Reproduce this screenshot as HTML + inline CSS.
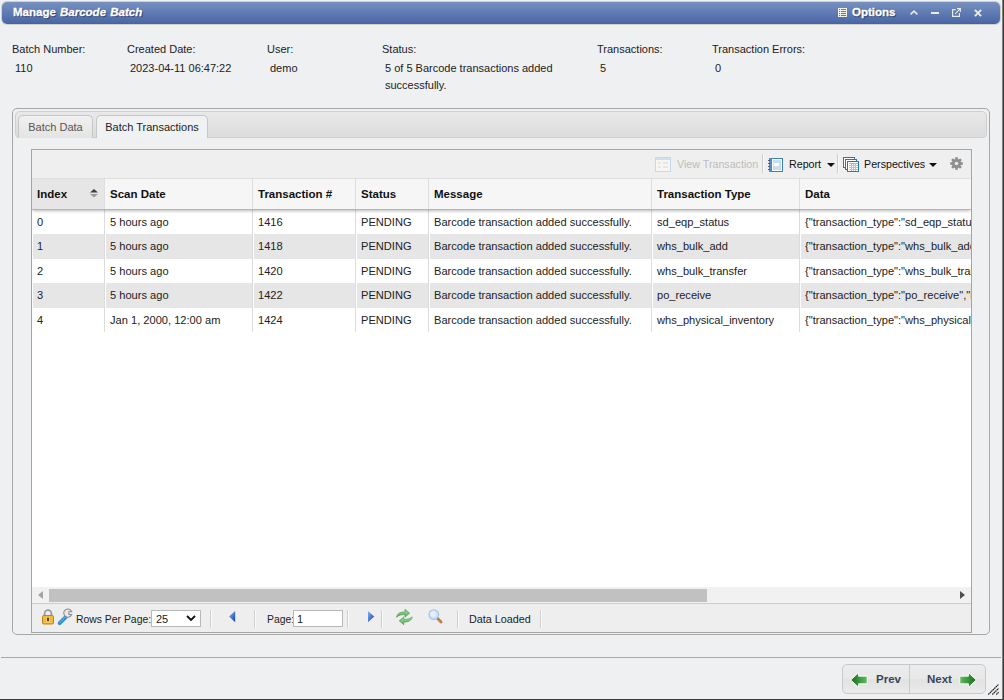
<!DOCTYPE html>
<html><head><meta charset="utf-8">
<style>
*{box-sizing:border-box;margin:0;padding:0}
html,body{width:1004px;height:700px;overflow:hidden;background:#eff0f2;font-family:"Liberation Sans",sans-serif;font-size:11px;color:#222;position:relative}
.abs{position:absolute}
svg{position:absolute;overflow:visible}
#titlebar{left:2px;top:2px;width:998px;height:22px;border-radius:5px;background:linear-gradient(#7690bf,#4a68a8 95%,#4060a2);box-shadow:0 0 0 1px #d3d0ca}
#title{left:13px;top:6px;color:#fff;font-weight:bold;font-size:11.5px;-webkit-text-stroke:0.3px #fff;word-spacing:1px;text-shadow:1px 1px 1px #23355e;white-space:nowrap}
#opts{left:852px;top:6px;color:#fff;font-weight:bold;font-size:11.5px;-webkit-text-stroke:0.3px #fff;text-shadow:1px 1px 1px #23355e;white-space:nowrap}
#edge{left:1002px;top:0;width:2px;height:700px;background:#3c3c3c;border-left:1px solid #808080}
#edge2{left:0;top:699px;width:1004px;height:1px;background:#3a3a3a}
.lbl{font-size:11px;color:#222;white-space:nowrap}
#frame{left:12px;top:108px;width:978px;height:527px;border:1px solid #a7a7a7;border-radius:5px}
#tabstrip{left:15px;top:111px;width:972px;height:27px;border:1px solid #cfcfcf;border-radius:5px 5px 4px 4px;background:linear-gradient(#e9e9e9,#dcdcdc)}
.tab{top:115px;height:23px;border:1px solid #c5c5c5;border-bottom:none;border-radius:5px 5px 0 0;font-size:11px;padding-top:5px;text-align:center}
#grid{left:31px;top:149px;width:941px;height:484px;border:1px solid #a5a5a5;background:#fff;overflow:hidden}
#tbar{left:0;top:0;width:939px;height:29px;background:#efefef}
.tb{position:absolute;top:8px;font-size:10.7px;color:#111;white-space:nowrap}
.tsep{position:absolute;top:4px;width:2px;height:19px;border-left:1px solid #cdcdcd;border-right:1px solid #fafafa}
#hdr{z-index:2;left:0;top:28px;width:939px;height:32px;background:#f6f6f6;border-top:1px solid #dedede;border-bottom:1px solid #b4b4b4;box-shadow:0 2px 3px -1px rgba(0,0,0,.28)}
.hc{position:absolute;top:0;height:30px;border-right:1px solid #dedede;font-weight:bold;font-size:11.5px;color:#111;padding:9px 0 0 5px;white-space:nowrap}
.row{position:absolute;left:0;width:939px;height:24.4px;overflow:hidden}
.row.alt{background:#e6e6e6}
.c0{border-left-color:#fff;padding-left:5px}
.c{position:absolute;top:0;height:100%;border-left:1px solid #fff;border-right:1px solid #dcdcdc;padding:6px 0 0 4px;white-space:nowrap;overflow:hidden;font-size:11.1px;color:#222}
#scroll{left:0;top:437px;width:939px;height:17px;background:#f1f1f1;border-bottom:1px solid #cdcdcd}
#thumb{left:17px;top:2px;width:658px;height:13px;background:#c1c1c1}
#foot{left:0;top:454px;width:939px;height:28px;background:#eeeeee}
.ft{position:absolute;top:10px;font-size:10.4px;color:#222;white-space:nowrap}
.fsep{position:absolute;top:6px;width:2px;height:18px;border-left:1px solid #cfcfcf;border-right:1px solid #fbfbfb}
#bsep{left:1px;top:657px;width:1000px;height:1px;background:#a9a9a9}
#btns{left:842px;top:664px;width:144px;height:30px;border:1px solid #c9c9c9;border-radius:5px;background:linear-gradient(#ececec,#e8e8e8 50%,#e2e2e2 52%,#ebebeb)}
.bt{position:absolute;top:673px;font-weight:bold;font-size:11.5px;color:#38455a;white-space:nowrap}
</style></head><body>
<div id="edge" class="abs"></div>
<div id="edge2" class="abs"></div>
<div id="titlebar" class="abs"></div>
<div id="title" class="abs">Manage <i>Barcode Batch</i></div>
<!-- list icon -->
<svg style="left:838px;top:8px" width="9" height="9" viewBox="0 0 9 9">
  <rect x="0.5" y="0.5" width="8" height="8" fill="none" stroke="#f2efe6" stroke-width="1"/>
  <path d="M0 2.5H9M0 4.5H9M0 6.5H9M2.5 0V9" stroke="#f2efe6" stroke-width="1"/>
</svg>
<div id="opts" class="abs">Options</div>
<svg style="left:910px;top:10px" width="8" height="5" viewBox="0 0 8 5"><path d="M0.6 4.4L4 1.2L7.4 4.4" fill="none" stroke="#ebe9e2" stroke-width="1.6"/></svg>
<div class="abs" style="left:931px;top:12px;width:8px;height:2px;background:#ebe9e2"></div>
<svg style="left:952px;top:8px" width="9" height="9" viewBox="0 0 9 9"><path d="M3.6 1.6H0.6V8.4H7.4V5" fill="none" stroke="#ebe9e2" stroke-width="1.2"/><path d="M3.2 5.8L8.2 0.8M5 0.6H8.4V4" fill="none" stroke="#ebe9e2" stroke-width="1.1"/></svg>
<svg style="left:974px;top:9px" width="8" height="8" viewBox="0 0 8 8"><path d="M0.9 0.9L7.1 7.1M7.1 0.9L0.9 7.1" stroke="#ebe9e2" stroke-width="2"/></svg>

<div class="abs lbl" style="left:12px;top:43px">Batch Number:</div>
<div class="abs lbl" style="left:15px;top:62px">110</div>
<div class="abs lbl" style="left:127px;top:43px">Created Date:</div>
<div class="abs lbl" style="left:130px;top:62px">2023-04-11 06:47:22</div>
<div class="abs lbl" style="left:267px;top:43px">User:</div>
<div class="abs lbl" style="left:270px;top:62px">demo</div>
<div class="abs lbl" style="left:382px;top:43px">Status:</div>
<div class="abs lbl" style="left:385px;top:60px;line-height:17px">5 of 5 Barcode transactions added<br>successfully.</div>
<div class="abs lbl" style="left:597px;top:43px">Transactions:</div>
<div class="abs lbl" style="left:600px;top:62px">5</div>
<div class="abs lbl" style="left:712px;top:43px">Transaction Errors:</div>
<div class="abs lbl" style="left:715px;top:62px">0</div>

<div id="frame" class="abs"></div>
<div id="tabstrip" class="abs"></div>
<div class="abs tab" style="left:18px;width:75px;background:linear-gradient(#f0f0f0,#e4e4e4);color:#555">Batch Data</div>
<div class="abs tab" style="left:96px;width:112px;background:#f0f1f3;color:#222">Batch Transactions</div>

<div id="grid" class="abs">
  <div id="tbar" class="abs">
    <svg style="left:623px;top:7px" width="16" height="15" viewBox="0 0 16 15"><rect x="0.5" y="0.5" width="15" height="14" fill="#f7f5f2" stroke="#c5dae6"/><rect x="1" y="1" width="14" height="2" fill="#cfe0ea"/><path d="M3 6H6M3 10H6M8 6H13M8 10H13" stroke="#d8d8d8"/></svg>
    <div class="tb" style="left:645px;color:#bdbdbd">View Transaction</div>
    <div class="tsep" style="left:730px"></div>
    <svg style="left:736px;top:8px" width="15" height="15" viewBox="0 0 15 15"><rect x="1.5" y="0.5" width="13" height="13" fill="#fff" stroke="#3f7cbc"/><rect x="1" y="0" width="3" height="14" fill="#4a8ccc"/><rect x="5" y="2" width="8" height="10" fill="#c6def4"/><rect x="6" y="5" width="5" height="3" fill="#fff"/><path d="M0 2.5H2M0 5.5H2M0 8.5H2M0 11.5H2" stroke="#6b5a50"/></svg>
    <div class="tb" style="left:757px">Report</div>
    <svg style="left:795px;top:13px" width="8" height="4" viewBox="0 0 8 4"><path d="M0 0H8L4 4Z" fill="#111"/></svg>
    <div class="tsep" style="left:805px"></div>
    <svg style="left:811px;top:7px" width="17" height="16" viewBox="0 0 17 16" shape-rendering="crispEdges">
      <rect x="0.5" y="0.5" width="11" height="10" fill="#fff" stroke="#1f7ab8" stroke-width="1"/>
      <rect x="2.5" y="2.5" width="11" height="10" fill="#fff" stroke="#1f7ab8" stroke-width="1"/>
      <rect x="4.5" y="4.5" width="11" height="10" fill="#fff" stroke="#1f7ab8" stroke-width="1"/>
      <path d="M6 6.5H15" stroke="#f0b020" stroke-width="1"/>
      <path d="M6 8.5H15M6 10.5H15M6 12.5H15M8.5 7V14M10.5 7V14M12.5 7V14" stroke="#a9c8e0" stroke-width="1"/>
    </svg>
    <div class="tb" style="left:832px">Perspectives</div>
    <svg style="left:897px;top:13px" width="8" height="4" viewBox="0 0 8 4"><path d="M0 0H8L4 4Z" fill="#111"/></svg>
    <svg style="left:918px;top:7px" width="13" height="13" viewBox="-6.5 -6.5 13 13">
      <g fill="#8e8e8e"><circle r="4.6"/>
      <rect x="-1.3" y="-6.3" width="2.6" height="12.6"/><rect x="-1.3" y="-6.3" width="2.6" height="12.6" transform="rotate(45)"/><rect x="-1.3" y="-6.3" width="2.6" height="12.6" transform="rotate(90)"/><rect x="-1.3" y="-6.3" width="2.6" height="12.6" transform="rotate(135)"/></g>
      <circle r="1.8" fill="#efefef"/>
    </svg>
  </div>
  <div id="hdr" class="abs">
    <div class="hc" style="left:0px;width:73px;background:#e6e6e6">Index</div>
    <div class="hc" style="left:73px;width:148px">Scan Date</div>
    <div class="hc" style="left:221px;width:103px">Transaction #</div>
    <div class="hc" style="left:324px;width:73px">Status</div>
    <div class="hc" style="left:397px;width:223px">Message</div>
    <div class="hc" style="left:620px;width:148px">Transaction Type</div>
    <div class="hc" style="left:768px;width:200px">Data</div>
    <svg style="left:58px;top:10px" width="8" height="9" viewBox="0 0 8 9"><path d="M0 3.5L4 0L8 3.5Z" fill="#3c3c3c"/><path d="M0 5L4 8.5L8 5Z" fill="#9a9a9a"/></svg>
  </div>
  <div class="row" style="top:60.0px"><div class="c c0" style="left:0px;width:73px">0</div><div class="c" style="left:73px;width:148px">5 hours ago</div><div class="c" style="left:221px;width:103px">1416</div><div class="c" style="left:324px;width:73px">PENDING</div><div class="c" style="left:397px;width:223px">Barcode transaction added successfully.</div><div class="c" style="left:620px;width:148px">sd_eqp_status</div><div class="c" style="left:768px;width:200px">{"transaction_type":"sd_eqp_status","</div></div>
  <div class="row alt" style="top:84.4px"><div class="c c0" style="left:0px;width:73px">1</div><div class="c" style="left:73px;width:148px">5 hours ago</div><div class="c" style="left:221px;width:103px">1418</div><div class="c" style="left:324px;width:73px">PENDING</div><div class="c" style="left:397px;width:223px">Barcode transaction added successfully.</div><div class="c" style="left:620px;width:148px">whs_bulk_add</div><div class="c" style="left:768px;width:200px">{"transaction_type":"whs_bulk_add","</div></div>
  <div class="row" style="top:108.8px"><div class="c c0" style="left:0px;width:73px">2</div><div class="c" style="left:73px;width:148px">5 hours ago</div><div class="c" style="left:221px;width:103px">1420</div><div class="c" style="left:324px;width:73px">PENDING</div><div class="c" style="left:397px;width:223px">Barcode transaction added successfully.</div><div class="c" style="left:620px;width:148px">whs_bulk_transfer</div><div class="c" style="left:768px;width:200px">{"transaction_type":"whs_bulk_transfer","</div></div>
  <div class="row alt" style="top:133.2px"><div class="c c0" style="left:0px;width:73px">3</div><div class="c" style="left:73px;width:148px">5 hours ago</div><div class="c" style="left:221px;width:103px">1422</div><div class="c" style="left:324px;width:73px">PENDING</div><div class="c" style="left:397px;width:223px">Barcode transaction added successfully.</div><div class="c" style="left:620px;width:148px">po_receive</div><div class="c" style="left:768px;width:200px">{"transaction_type":"po_receive","i</div></div>
  <div class="row" style="top:157.6px"><div class="c c0" style="left:0px;width:73px">4</div><div class="c" style="left:73px;width:148px">Jan 1, 2000, 12:00 am</div><div class="c" style="left:221px;width:103px">1424</div><div class="c" style="left:324px;width:73px">PENDING</div><div class="c" style="left:397px;width:223px">Barcode transaction added successfully.</div><div class="c" style="left:620px;width:148px">whs_physical_inventory</div><div class="c" style="left:768px;width:200px">{"transaction_type":"whs_physical_inventory"</div></div>
  <div id="scroll" class="abs">
    <svg style="left:6px;top:4px" width="5" height="8" viewBox="0 0 5 8"><path d="M5 0V8L0 4Z" fill="#a3a3a3"/></svg>
    <div id="thumb" class="abs"></div>
    <svg style="left:928px;top:4px" width="5" height="8" viewBox="0 0 5 8"><path d="M0 0V8L5 4Z" fill="#505050"/></svg>
  </div>
  <div id="foot" class="abs">
    <svg style="left:10px;top:5px" width="13" height="16" viewBox="0 0 13 16">
      <path d="M2.6 6.5V4.6A3.4 3.4 0 0 1 9.4 4.6V6.5" fill="none" stroke="#9c9c9c" stroke-width="1.7"/>
      <path d="M1.8 6.2H3.4M8.6 6.2H10.2" stroke="#6a8ab0" stroke-width="0.8"/>
      <rect x="0.5" y="6.5" width="11" height="8.5" rx="1.2" fill="#e9a928" stroke="#c5821a"/>
      <rect x="1.6" y="7.6" width="8.8" height="6.2" fill="#f9d56a"/>
      <path d="M2.2 9H4.3M2.2 10.7H4.3M2.2 12.4H4.3M7.7 9H9.8M7.7 10.7H9.8M7.7 12.4H9.8" stroke="#d99a2a" stroke-width="0.9"/>
      <rect x="5.2" y="8.6" width="1.6" height="3.6" fill="#3a2a10"/>
    </svg>
    <svg style="left:25px;top:4px" width="17" height="17" viewBox="0 0 17 17">
      <path d="M2.6 15.2L9 8.8" stroke="#2f8fd2" stroke-width="3.8" stroke-linecap="round"/>
      <path d="M2.9 14.5L8.6 8.8" stroke="#c4e6fb" stroke-width="0.9" stroke-dasharray="1.1 0.9"/>
      <path d="M14.7 3.7A4.1 4.1 0 1 0 14.7 6.5L11.9 6.5L11.9 3.7Z" fill="#e8e8e8" stroke="#8a8a8a" stroke-width="1.05"/>
    </svg>
    <div class="ft" style="left:44px">Rows Per Page:</div>
    <div class="abs" style="left:119px;top:6px;width:50px;height:17px;background:#fff;border:1px solid #b8b8b8"></div>
    <div class="ft" style="left:124px;top:9px;font-size:11px">25</div>
    <svg style="left:154px;top:11px" width="10" height="6" viewBox="0 0 10 6"><path d="M1 1L5 5L9 1" fill="none" stroke="#111" stroke-width="1.8"/></svg>
    <div class="fsep" style="left:178px"></div>
    <svg style="left:197px;top:7px" width="7" height="11" viewBox="0 0 7 11"><defs><linearGradient id="tl" x1="0" y1="0" x2="1" y2="1"><stop offset="0" stop-color="#8ab4f0"/><stop offset="1" stop-color="#0b3fb8"/></linearGradient></defs><path d="M6.2 0V11.2L0 5.6Z" fill="url(#tl)"/></svg>
    <div class="fsep" style="left:222px"></div>
    <div class="ft" style="left:235px">Page:</div>
    <div class="abs" style="left:261px;top:6px;width:50px;height:17px;background:#fff;border:1px solid #b8b8b8"></div>
    <div class="ft" style="left:265px;top:9px;font-size:11px">1</div>
    <div class="fsep" style="left:315px"></div>
    <svg style="left:336px;top:7px" width="7" height="11" viewBox="0 0 7 11"><path d="M0 0V11.2L6.2 5.6Z" fill="url(#tl)"/></svg>
    <div class="fsep" style="left:349px"></div>
    <svg style="left:364px;top:5px" width="17" height="16" viewBox="0 0 17 16">
      <defs><linearGradient id="gr" x1="0" y1="0" x2="0" y2="1"><stop offset="0" stop-color="#a6dba6"/><stop offset="1" stop-color="#56ad56"/></linearGradient></defs>
      <path d="M0.6 8.2C1.2 4.6 4.2 2.8 9 3V0.3L13.6 4.2L9 8.1V5.6C5.6 5.4 2.8 6.2 0.6 8.2Z" fill="url(#gr)" stroke="#4d9c4d" stroke-width="0.7"/>
      <path d="M16.2 7.8C15.6 11.4 12.6 13.2 7.8 13V15.7L3.2 11.8L7.8 7.9V10.4C11.2 10.6 14 9.8 16.2 7.8Z" fill="url(#gr)" stroke="#4d9c4d" stroke-width="0.7"/>
    </svg>
    <svg style="left:396px;top:5px" width="15" height="15" viewBox="0 0 15 15">
      <path d="M9.6 9.6L13 13" stroke="#b8733a" stroke-width="2.8" stroke-linecap="round"/>
      <path d="M10 10.6L12.6 13.2" stroke="#e0a060" stroke-width="0.8"/>
      <circle cx="5.8" cy="5.6" r="4.8" fill="#cfe2f7" stroke="#9fc3ea" stroke-width="1.1"/>
      <circle cx="5.2" cy="5" r="2.8" fill="#e6f0fb"/>
    </svg>
    <div class="fsep" style="left:425px"></div>
    <div class="ft" style="left:437px;top:9px;font-size:10.8px">Data Loaded</div>
    <div class="fsep" style="left:508px"></div>
  </div>
</div>

<div id="bsep" class="abs"></div>
<div id="btns" class="abs"></div>
<div class="abs" style="left:909px;top:665px;width:1px;height:28px;background:#c9c9c9"></div>
<svg style="left:850px;top:672px" width="18" height="16" viewBox="0 0 18 16">
  <defs><linearGradient id="ga" x1="0" x2="1"><stop offset="0" stop-color="#1e6a1e"/><stop offset="1" stop-color="#5cbf5c"/></linearGradient>
  <linearGradient id="gb" x1="1" x2="0"><stop offset="0" stop-color="#1e6a1e"/><stop offset="1" stop-color="#5cbf5c"/></linearGradient></defs>
  <path d="M0.8 8L8.6 0.6V4.2H17.2V11.8H8.6V15.4Z" fill="url(#ga)" stroke="#fff" stroke-width="0.9"/>
</svg>
<div class="bt" style="left:876px">Prev</div>
<div class="bt" style="left:927px">Next</div>
<svg style="left:959px;top:672px" width="18" height="16" viewBox="0 0 18 16">
  <path d="M17.2 8L9.4 0.6V4.2H0.8V11.8H9.4V15.4Z" fill="url(#gb)" stroke="#fff" stroke-width="0.9"/>
</svg>
<svg style="left:987px;top:684px" width="14" height="14" viewBox="0 0 14 14">
  <path d="M1.3 10.5L11.6 0.4M5.3 10.5L11.6 4.4M9.3 10.5L11.6 8.2" stroke="#1a1a1a" stroke-width="1.2" stroke-dasharray="1.6 0.5"/>
</svg>
</body></html>
